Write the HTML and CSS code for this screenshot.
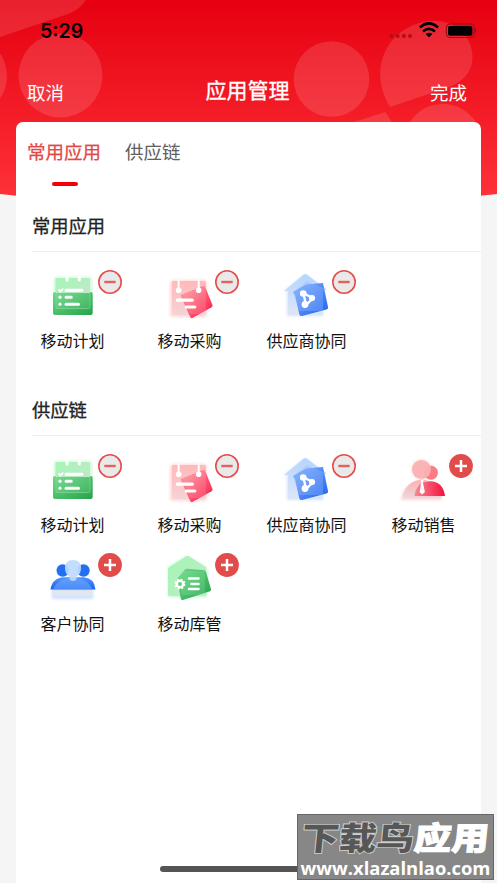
FILE: index.html
```html
<!DOCTYPE html>
<html lang="zh-CN">
<head>
<meta charset="utf-8">
<title>应用管理</title>
<link rel="stylesheet" href="styles.css">
</head>
<body>
<svg class="defs" width="0" height="0" aria-hidden="true">
  <defs>
    <linearGradient id="green" x1="0" y1="0" x2="1" y2="1"><stop stop-color="#6ed98a"/><stop offset="1" stop-color="#27a34a"/></linearGradient>
    <linearGradient id="mint" x1="0" y1="0" x2="1" y2="1"><stop stop-color="#a2f7b4"/><stop offset="1" stop-color="#c3e8cb"/></linearGradient>
    <linearGradient id="red" x1="0" y1="0" x2="1" y2="1"><stop stop-color="#ffa3a8"/><stop offset=".9" stop-color="#fb2450"/></linearGradient>
    <linearGradient id="pink" x1="0" y1="0" x2="0" y2="1"><stop stop-color="#ffb9b9"/><stop offset="1" stop-color="#f6d3d6"/></linearGradient>
    <linearGradient id="blue" x1="0" y1="0" x2="1" y2="1"><stop stop-color="#86b3ff"/><stop offset="1" stop-color="#1e61ee"/></linearGradient>
    <linearGradient id="sky" x1="0" y1="0" x2="0" y2="1"><stop stop-color="#b5d5ff"/><stop offset="1" stop-color="#dde6f7"/></linearGradient>
    <linearGradient id="bust" x1="0" y1="0" x2="0" y2="1"><stop stop-color="#ffaeb0"/><stop offset="1" stop-color="#ead9dc"/></linearGradient>
    <linearGradient id="suit" x1="0" y1="0" x2="1" y2="0"><stop stop-color="#f88a98"/><stop offset="1" stop-color="#f5103d"/></linearGradient>
    <linearGradient id="people" x1="0" y1="0" x2="0" y2="1"><stop stop-color="#4e94ff"/><stop offset="1" stop-color="#1b66ef"/></linearGradient>
    <filter id="glow" x="-30%" y="-30%" width="160%" height="160%"><feGaussianBlur stdDeviation="1.8"/></filter>
    <filter id="edge"><feGaussianBlur stdDeviation=".5"/></filter>
    <symbol id="plan" viewBox="0 0 60 56">
      <rect x="11" y="9" width="38" height="20" rx="3" fill="#b9f8c8" opacity=".7" filter="url(#glow)"/>
      <rect x="10" y="24" width="39.7" height="23" rx="2" fill="url(#green)"/>
      <path d="M14 10h31.5q1.500 0 1.500 1.500V25H12.500V11.500q0-1.500 1.500-1.500z" fill="url(#mint)"/>
      <path d="M13 24.500V39q0 1.500 1.500 1.500h31q1.500 0 1.500-1.500V24.500" fill="#a8efb9" fill-opacity=".14" stroke="#8bdb9d" stroke-width=".6"/>
      <g stroke="#fff" stroke-width="3" stroke-linecap="round" fill="none"><path d="M24 9v3M36.300 9v3M23 22.200h16M23 29.200h5.300M23 36.200h12.500"/><path d="M16 22l1.500 1.400 2.300-2.300" stroke-width="1.800"/></g>
      <circle cx="17" cy="29.200" r="1.600" fill="#fff"/><circle cx="17" cy="36.200" r="1.600" fill="#fff"/>
    </symbol>
    <symbol id="purchase" viewBox="0 0 60 56">
      <rect x="10" y="12" width="37" height="37" rx="3" fill="#ffc7c9" opacity=".7" filter="url(#glow)"/>
      <rect x="12" y="13" width="34" height="34" rx="2" fill="url(#pink)"/>
      <path d="M20.500 27L43 18q1.500-.5 2.200 1L52.500 37q.5 1.500-.9 2.300L32.500 50q-1.500.7-2.300-.9z" fill="url(#red)"/>
      <path d="M19 17h27v29H30z" fill="#ffc0c5" opacity=".2" filter="url(#edge)"/>
      <g stroke="#fff" fill="none" stroke-linecap="round"><path d="M18.600 12v10M38.700 12v10" stroke-width="2"/><path d="M17.300 32.200h15M26.300 39h8.500" stroke-width="3.200"/></g>
      <circle cx="18.600" cy="22.300" r="2.800" fill="#fff"/><circle cx="38.700" cy="22.300" r="2.800" fill="#fff"/>
    </symbol>
    <symbol id="supplier" viewBox="0 0 60 56">
      <path d="M28 6L50 22h-4v26H10V23H7z" fill="#b7d3ff" opacity=".6" filter="url(#glow)"/>
      <path d="M27 6.500q1.300-.9 2.600 0L50 22h-4v24q0 1-1 1H12q-1 0-1-1V23H7z" fill="url(#sky)"/>
      <path d="M16 24L29 16.500 46 15l5 24q.3 2-1.500 2.500L25 48q-2 .4-2.600-1.500L18 27z" fill="url(#blue)"/>
      <path d="M16 24L30 13l18 8-2 1v21H22z" fill="#8fb8ff" opacity=".35" filter="url(#edge)"/>
      <path d="M26.500 25.500L36.200 30 29 37z" fill="none" stroke="#fff" stroke-width="2.400"/>
      <circle cx="26.200" cy="25.500" r="3.300" fill="#fff"/><circle cx="35" cy="30" r="3.100" fill="#fff"/><circle cx="28" cy="36.500" r="3.400" fill="#fff"/>
    </symbol>
    <symbol id="sales" viewBox="0 0 60 56">
      <path d="M7 48q2-17 20-18 16 1 21 18z" fill="#ffbfc2" opacity=".7" filter="url(#glow)"/>
      <circle cx="27.500" cy="17.500" r="10" fill="#ffc3c3" opacity=".6" filter="url(#glow)"/>
      <circle cx="37" cy="20.800" r="7" fill="#fb7d83"/>
      <circle cx="27.500" cy="17.500" r="9.500" fill="#fbb0b3" opacity=".94"/>
      <path d="M8.500 46q2-16 19-18.500Q43 29 48 46z" fill="url(#bust)"/>
      <path d="M20.500 44Q22 30 36 29.300 49 29.500 51 44z" fill="url(#suit)"/>
      <path d="M26.500 28h3.200l-.8 2.500 2 9.500-2.800 2.500-2.500-2.500 1.700-9.500z" fill="#fff"/>
    </symbol>
    <symbol id="client" viewBox="0 0 60 56">
      <rect x="9" y="37" width="41" height="11" fill="#c4d8ff" opacity=".8" filter="url(#glow)"/>
      <circle cx="19.700" cy="19.500" r="6.200" fill="#226ff0"/><circle cx="40.500" cy="19.500" r="6.200" fill="#226ff0"/>
      <path d="M7.500 38.500Q9 27 21 26.300h20q10.500 1 11.500 12.200z" fill="url(#people)"/>
      <path d="M10 39Q15 26.500 29.500 26.500 45 27 49.500 39z" fill="#74aaff" opacity=".55"/>
      <path d="M9.500 39.500h40V45h-40z" fill="#e1e7ee"/>
      <path d="M30 9q8 0 8 8 0 6-4.500 8.500v2Q33 30 30 30t-3.500-2.500v-2Q22 23 22 17q0-8 8-8z" fill="#bddaff" opacity=".93"/>
    </symbol>
    <symbol id="stock" viewBox="0 0 60 56">
      <path d="M8 16L27 5l20 12v29H8z" fill="#aef8bd" opacity=".8" filter="url(#glow)"/>
      <path d="M26 5.300q1.500-.8 3 0L45 15.500q1 .7 1 2V44q0 1-1 1H9q-1 0-1-1V18.500q0-1.500 1-2z" fill="url(#mint)"/>
      <path d="M18 27q0-1 1-1.500L25 18.500q1-.8 2-.7l17 1.500q1.500.3 2 1.700L51 38q.4 1.500-1 2.200L23 49q-1.700.4-2.200-1.300L17.500 30z" fill="url(#green)"/>
      <path d="M18 20h27v24H22z" fill="#a6efb8" opacity=".2"/>
      <circle cx="20" cy="33" r="3.200" fill="none" stroke="#fff" stroke-width="2.400"/>
      <circle cx="20" cy="33" r="4.500" fill="none" stroke="#fff" stroke-width="1.800" stroke-dasharray="2.000 1.534"/>
      <path d="M29 27.500h9.500M31.500 33h7M29 38h9.500" stroke="#fff" stroke-width="2.600" stroke-linecap="round"/>
    </symbol>
    <symbol id="minus" viewBox="0 0 24 24"><circle cx="12" cy="12" r="11.200" fill="#e9e9ea" stroke="#e54d4b" stroke-width="1.600"/><path d="M6.300 12h11.400" stroke="#e5605e" stroke-width="2.400"/></symbol>
    <symbol id="plus" viewBox="0 0 24 24"><circle cx="12" cy="12" r="11.900" fill="#e14b49"/><path d="M6 12h12M12 6v12" stroke="#fff" stroke-width="2.500"/></symbol>
  </defs>
</svg>
<div class="screen">
  <svg class="backdrop" viewBox="0 0 497 200" width="497" height="200" aria-hidden="true">
    <defs><linearGradient id="hero" x1="0" y1="0" x2="0" y2="1"><stop stop-color="#e60010"/><stop offset="1" stop-color="#ff343a"/></linearGradient></defs>
    <path d="M0 0h497v194Q248 222 0 194z" fill="url(#hero)"/>
    <g fill="#fff" fill-opacity=".13">
      <path d="M0 0h86Q79 10 68 14L0 37z"/>
      <circle cx="-33" cy="76" r="40"/>
      <circle cx="60.500" cy="75.500" r="42"/>
      <circle cx="331.500" cy="79" r="37.800"/>
      <path d="M390 107C370 75 381 35 419 23c30-9 54 10 53.500 35-.4 15-11 24-23 29z"/>
      <path d="M354 122l31.500-10 6 10z"/>
      <path d="M410 122q12-18 33-18 20 0 33 18z"/>
    </g>
  </svg>
  <header>
    <div class="status">
      <span class="time">5:29</span>
      <svg width="90" height="20" viewBox="0 0 90 20" aria-label="Wi-Fi 电池">
        <g fill="#b50c18"><circle cx="4.500" cy="15" r="2"/><circle cx="10.700" cy="15" r="2"/><circle cx="16.900" cy="15" r="2"/><circle cx="23" cy="15" r="2"/></g>
        <g fill="none" stroke="#000" stroke-width="2.600"><path d="M32.900 6.400q9-8 18.200 0M36 10.400q6-5 12 0"/></g>
        <path d="M38.600 13q3.400-2.500 6.800 0L42 16.500z"/>
        <rect x="59.300" y="3" width="28" height="13.500" rx="4" fill="none" stroke="#97101a" stroke-width="1.200"/><rect x="61" y="5" width="24.300" height="9.700" rx="2"/><path d="M88.500 7q1.500 2.500 0 5z" fill="#7d0812"/>
      </svg>
    </div>
    <nav class="bar"><span class="action">取消</span><h1>应用管理</h1><span class="action done">完成</span></nav>
  </header>
  <main class="card">
    <div class="tabs"><span class="tab active">常用应用</span><span class="tab">供应链</span></div>
    <section>
      <h2>常用应用</h2>
      <div class="apps">
        <div class="app"><svg class="icon"><use href="#plan"/></svg><svg class="badge"><use href="#minus"/></svg><span>移动计划</span></div>
        <div class="app"><svg class="icon"><use href="#purchase"/></svg><svg class="badge"><use href="#minus"/></svg><span>移动采购</span></div>
        <div class="app"><svg class="icon"><use href="#supplier"/></svg><svg class="badge"><use href="#minus"/></svg><span>供应商协同</span></div>
      </div>
    </section>
    <section>
      <h2>供应链</h2>
      <div class="apps">
        <div class="app"><svg class="icon"><use href="#plan"/></svg><svg class="badge"><use href="#minus"/></svg><span>移动计划</span></div>
        <div class="app"><svg class="icon"><use href="#purchase"/></svg><svg class="badge"><use href="#minus"/></svg><span>移动采购</span></div>
        <div class="app"><svg class="icon"><use href="#supplier"/></svg><svg class="badge"><use href="#minus"/></svg><span>供应商协同</span></div>
        <div class="app"><svg class="icon"><use href="#sales"/></svg><svg class="badge"><use href="#plus"/></svg><span>移动销售</span></div>
        <div class="app"><svg class="icon"><use href="#client"/></svg><svg class="badge"><use href="#plus"/></svg><span>客户协同</span></div>
        <div class="app"><svg class="icon"><use href="#stock"/></svg><svg class="badge"><use href="#plus"/></svg><span>移动库管</span></div>
      </div>
    </section>
  </main>
  <div class="home-indicator"></div>
  <div class="watermark"><div class="brand"><span>下载鸟</span><b>应用</b></div><div class="url">www.xlazalnlao.com</div></div>
</div>
</body>
</html>
```
FILE: styles.css
```css
* { box-sizing: border-box; }
body { margin: 0; background: #f5f5f5; color: #111; font-family: Inter, "Noto Sans CJK SC", sans-serif; }
h1, h2 { margin: 0; font-weight: 400; }
.defs { position: absolute; }
.screen { position: relative; width: 497px; height: 883px; overflow: hidden; display: flex; flex-direction: column; }
.backdrop { position: absolute; top: 0; left: 0; }
header { position: relative; height: 122px; flex: none; }
.status { display: flex; justify-content: space-between; align-items: flex-start; padding: 21px 20px 0 40px; height: 66px; }
.time { font-size: 19.500px; line-height: 20px; font-weight: 600; color: #000; }
.bar { display: grid; grid-template-columns: 1fr auto 1fr; color: #fff; padding: 0 30px 0 27px; height: 50px; align-items: center; }
.action { font-size: 18.500px; line-height: 28px; margin-top: 4px; }
.done { text-align: right; }
h1 { margin-left: 1px; font-size: 21px; line-height: 30px; -webkit-text-stroke: .3px #fff; }
.card { position: relative; flex: 1; width: 465px; margin-left: 16px; background: #fff; border-radius: 7px 7px 0 0; }
.tabs { display: flex; gap: 24px; padding: 16px 0 0 11px; height: 83px; }
.tab { font-size: 18.500px; line-height: 28px; color: #606060; white-space: nowrap; }
.active { display: flex; flex-direction: column; align-items: center; color: #e14846; -webkit-text-stroke: .25px #e14846; }
.active::after { content: ""; width: 26px; height: 4px; margin: 15.500px 0 0 2px; border-radius: 2px; background: #f60008; }
section { height: 184px; }
h2 { height: 47px; margin-left: 16px; border-bottom: 1px solid #efefef; font-size: 18.300px; line-height: 42px; color: #222; -webkit-text-stroke: .3px #222; }
.apps { display: grid; grid-template-columns: repeat(4, 117px); grid-auto-rows: 99px; margin-left: -2px; padding-top: 16px; }
.app { position: relative; display: flex; flex-direction: column; align-items: center; font-size: 16px; line-height: 24px; white-space: nowrap; }
.app span { margin-top: 5px; }
.icon { width: 60px; height: 56px; }
.badge { position: absolute; left: 84px; top: 2px; width: 24px; height: 24px; }
.home-indicator { position: absolute; left: 160px; top: 866px; width: 176px; height: 6px; border-radius: 3px; background: #555; }
.watermark { position: absolute; left: 297px; top: 814px; width: 197px; height: 66px; padding-top: 5px; background: #878787; border: 1px solid #666; color: #fff; overflow: hidden; text-align: center; }
.brand { display: flex; justify-content: center; height: 38px; font-size: 37.500px; line-height: 38px; font-weight: 900; transform: scaleY(.86) skewX(-5deg); }
.brand span { color: #575757; -webkit-text-stroke: 2px #d0d0d0; paint-order: stroke fill; }
.brand b { font-weight: 900; -webkit-text-stroke: 1px #fff; }
.url { font-family: "Open Sans", sans-serif; font-size: 18.400px; line-height: 20px; font-weight: 700; }
```
